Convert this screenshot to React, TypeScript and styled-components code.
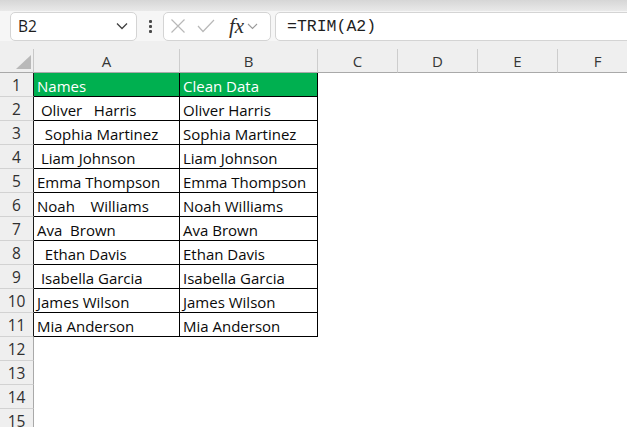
import React from "react";
import styled, { createGlobalStyle } from "styled-components";

const GlobalStyle = createGlobalStyle`
  html, body { margin: 0; padding: 0; background: #ffffff; overflow: hidden; }
  body { font-family: "Open Sans", "Liberation Sans", Arial, sans-serif; }
`;

const Page = styled.div`
  width: 627px;
  height: 427px;
  overflow: hidden;
  display: flex;
  flex-direction: column;
  background: #ffffff;
`;

const RibbonEdge = styled.div`
  height: 11px;
  flex-shrink: 0;
  background: linear-gradient(#d6d6d6, #e9e9e9);
`;

const FormulaBar = styled.div`
  height: 30px;
  flex-shrink: 0;
  display: flex;
  align-items: center;
  padding-left: 10px;
  background: #f6f6f6;
`;

const Box = styled.div<{ $w?: number }>`
  box-sizing: border-box;
  height: 29px;
  ${(p) => (p.$w ? `width: ${p.$w}px; flex-shrink: 0;` : "flex: 1;")}
  background: #ffffff;
  border: 1px solid #d4d4d4;
  border-radius: 5px;
  display: flex;
  align-items: center;
`;

const NameText = styled.span`
  flex: 1;
  padding-left: 7px;
  font-size: 15.5px;
  color: #1e1e1e;
`;

const Chevron = styled.svg`
  display: block;
  flex-shrink: 0;
`;

const Dots = styled.div`
  width: 26px;
  flex-shrink: 0;
  display: flex;
  flex-direction: column;
  align-items: center;
  gap: 2px;
`;

const Dot = styled.span`
  width: 3px;
  height: 3px;
  background: #4a4a4a;
  border-radius: 1px;
`;

const FxIcons = styled.div`
  display: flex;
  align-items: center;
  padding-left: 6px;
`;

const Fx = styled.span`
  font-family: "Liberation Serif", "Times New Roman", serif;
  font-style: italic;
  font-size: 21px;
  color: #2b2b2b;
  margin-left: 14px;
  margin-right: 3px;
  line-height: 1;
`;

const FormulaBox = styled(Box)`
  margin-left: 4px;
  margin-right: -10px;
`;

const FormulaText = styled.span`
  padding-left: 11px;
  font-family: "Liberation Mono", "Courier New", monospace;
  font-size: 16.5px;
  color: #1e1e1e;
`;

const HeaderBand = styled.div`
  height: 8px;
  flex-shrink: 0;
  background: #efefef;
`;

const Sheet = styled.div`
  flex: 1;
  display: grid;
  grid-template-columns: 34px 146px 138px 80px 80px 80px 80px;
  grid-auto-rows: 24px;
  align-content: start;
  background: #ffffff;
  overflow: hidden;
`;

const Corner = styled.div`
  position: relative;
  box-sizing: border-box;
  background: #efefef;
  border-right: 1px solid #c8c8c8;
  border-bottom: 1px solid #a9a9a9;
`;

const CornerTriangle = styled.svg`
  position: absolute;
  right: 2px;
  bottom: 3px;
`;

const ColHeader = styled.div`
  box-sizing: border-box;
  background: #efefef;
  border-right: 1px solid #cdcdcd;
  border-bottom: 1px solid #a9a9a9;
  display: flex;
  align-items: center;
  justify-content: center;
  font-size: 15px;
  color: #363636;
  padding-top: 1px;
`;

const RowHeader = styled.div<{ $table: boolean }>`
  box-sizing: border-box;
  background: #efefef;
  border-right: 1px solid ${(p) => (p.$table ? "#1a1a1a" : "#a9a9a9")};
  border-bottom: 1px solid #d2d2d2;
  display: flex;
  align-items: flex-end;
  justify-content: center;
  font-size: 15.5px;
  color: #303030;
`;

const Cell = styled.div<{ $table?: boolean; $head?: boolean }>`
  box-sizing: border-box;
  background: ${(p) => (p.$head ? "#00b050" : "#ffffff")};
  border-right: 1px solid ${(p) => (p.$table ? "#000000" : "transparent")};
  border-bottom: 1px solid ${(p) => (p.$table ? "#000000" : "transparent")};
  display: flex;
  align-items: flex-end;
  padding: 0 0 0 3px;
  font-size: 15px;
  color: ${(p) => (p.$head ? "#ffffff" : "#0a0a0a")};
  white-space: pre;
  overflow: hidden;
`;

const rows: [string, string][] = [
  ["Names", "Clean Data"],
  [" Oliver   Harris", "Oliver Harris"],
  ["  Sophia Martinez", "Sophia Martinez"],
  [" Liam Johnson", "Liam Johnson"],
  ["Emma Thompson", "Emma Thompson"],
  ["Noah    Williams", "Noah Williams"],
  ["Ava  Brown", "Ava Brown"],
  ["  Ethan Davis", "Ethan Davis"],
  [" Isabella Garcia", "Isabella Garcia"],
  ["James Wilson", "James Wilson"],
  ["Mia Anderson", "Mia Anderson"],
];

const columns = ["A", "B", "C", "D", "E", "F"];

export default function App() {
  const allRows = Array.from({ length: 15 }, (_, i) => i + 1);
  return (
    <Page>
      <GlobalStyle />
      <RibbonEdge />
      <FormulaBar>
        <Box $w={127}>
          <NameText>B2</NameText>
          <Chevron width="12" height="8" viewBox="0 0 12 8" style={{ marginRight: 8 }}>
            <path d="M1 1.5 L6 6.5 L11 1.5" fill="none" stroke="#404040" strokeWidth="1.3" />
          </Chevron>
        </Box>
        <Dots>
          <Dot />
          <Dot />
          <Dot />
        </Dots>
        <Box $w={108}>
          <FxIcons>
            <svg width="16" height="16" viewBox="0 0 16 16">
              <path d="M1.5 1.5 L14.5 14.5 M14.5 1.5 L1.5 14.5" stroke="#b8b8b8" strokeWidth="1.2" fill="none" />
            </svg>
            <svg width="18" height="14" viewBox="0 0 18 14" style={{ marginLeft: 11 }}>
              <path d="M1 7 L6 12.5 L17 1" stroke="#b8b8b8" strokeWidth="1.2" fill="none" />
            </svg>
            <Fx>fx</Fx>
            <Chevron width="11" height="7" viewBox="0 0 11 7">
              <path d="M1 1 L5.5 5.5 L10 1" fill="none" stroke="#9a9a9a" strokeWidth="1.1" />
            </Chevron>
          </FxIcons>
        </Box>
        <FormulaBox>
          <FormulaText>=TRIM(A2)</FormulaText>
        </FormulaBox>
      </FormulaBar>
      <HeaderBand />
      <Sheet>
        <Corner>
          <CornerTriangle width="15" height="14" viewBox="0 0 15 14">
            <path d="M15 0 L15 14 L0 14 Z" fill="#b9b9b9" />
          </CornerTriangle>
        </Corner>
        {columns.map((c) => (
          <ColHeader key={c}>{c}</ColHeader>
        ))}
        {allRows.map((r) => {
          const data = rows[r - 1];
          const inTable = !!data;
          return (
            <React.Fragment key={r}>
              <RowHeader $table={inTable}>{r}</RowHeader>
              <Cell $table={inTable} $head={r === 1}>
                {data ? data[0] : ""}
              </Cell>
              <Cell $table={inTable} $head={r === 1}>
                {data ? data[1] : ""}
              </Cell>
              <Cell />
              <Cell />
              <Cell />
              <Cell />
            </React.Fragment>
          );
        })}
      </Sheet>
    </Page>
  );
}
